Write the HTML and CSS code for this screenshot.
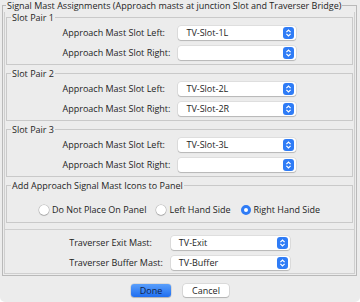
FILE: index.html
```html
<!DOCTYPE html>
<html lang="en">
<head>
  <meta charset="UTF-8">
  <title>Signal Mast Assignments</title>
  <link rel="stylesheet" href="styles.css">
</head>
<body>
  <div class="window">
    <fieldset class="outer">
      <legend>Signal Mast Assignments (Approach masts at junction Slot and Traverser Bridge)</legend>
      <div class="inner">
        <fieldset class="group">
          <legend>Slot Pair 1</legend>
          <div class="form">
            <label>Approach Mast Slot Left:</label>
            <div class="combo"><span>TV-Slot-1L</span><svg class="step" viewBox="0 0 11 12"><rect width="11" height="12" rx="3"/><path d="M3.4 5.1 L5.5 3 L7.6 5.1 M3.4 6.9 L5.5 9 L7.6 6.9"/></svg></div>
            <label>Approach Mast Slot Right:</label>
            <div class="combo"><span></span><svg class="step" viewBox="0 0 11 12"><rect width="11" height="12" rx="3"/><path d="M3.4 5.1 L5.5 3 L7.6 5.1 M3.4 6.9 L5.5 9 L7.6 6.9"/></svg></div>
          </div>
        </fieldset>
        <fieldset class="group">
          <legend>Slot Pair 2</legend>
          <div class="form">
            <label>Approach Mast Slot Left:</label>
            <div class="combo"><span>TV-Slot-2L</span><svg class="step" viewBox="0 0 11 12"><rect width="11" height="12" rx="3"/><path d="M3.4 5.1 L5.5 3 L7.6 5.1 M3.4 6.9 L5.5 9 L7.6 6.9"/></svg></div>
            <label>Approach Mast Slot Right:</label>
            <div class="combo"><span>TV-Slot-2R</span><svg class="step" viewBox="0 0 11 12"><rect width="11" height="12" rx="3"/><path d="M3.4 5.1 L5.5 3 L7.6 5.1 M3.4 6.9 L5.5 9 L7.6 6.9"/></svg></div>
          </div>
        </fieldset>
        <fieldset class="group">
          <legend>Slot Pair 3</legend>
          <div class="form">
            <label>Approach Mast Slot Left:</label>
            <div class="combo"><span>TV-Slot-3L</span><svg class="step" viewBox="0 0 11 12"><rect width="11" height="12" rx="3"/><path d="M3.4 5.1 L5.5 3 L7.6 5.1 M3.4 6.9 L5.5 9 L7.6 6.9"/></svg></div>
            <label>Approach Mast Slot Right:</label>
            <div class="combo"><span></span><svg class="step" viewBox="0 0 11 12"><rect width="11" height="12" rx="3"/><path d="M3.4 5.1 L5.5 3 L7.6 5.1 M3.4 6.9 L5.5 9 L7.6 6.9"/></svg></div>
          </div>
        </fieldset>
        <fieldset class="group placement">
          <legend>Add Approach Signal Mast Icons to Panel</legend>
          <div class="radios">
            <label class="radio"><span class="dot"></span>Do Not Place On Panel</label>
            <label class="radio"><span class="dot"></span>Left Hand Side</label>
            <label class="radio"><span class="dot on"></span>Right Hand Side</label>
          </div>
        </fieldset>
        <div class="traverser">
          <div class="form">
            <label>Traverser Exit Mast:</label>
            <div class="combo wide"><span>TV-Exit</span><svg class="step" viewBox="0 0 11 12"><rect width="11" height="12" rx="3"/><path d="M3.4 5.1 L5.5 3 L7.6 5.1 M3.4 6.9 L5.5 9 L7.6 6.9"/></svg></div>
            <label>Traverser Buffer Mast:</label>
            <div class="combo wide"><span>TV-Buffer</span><svg class="step" viewBox="0 0 11 12"><rect width="11" height="12" rx="3"/><path d="M3.4 5.1 L5.5 3 L7.6 5.1 M3.4 6.9 L5.5 9 L7.6 6.9"/></svg></div>
          </div>
        </div>
      </div>
    </fieldset>
    <div class="buttons">
      <button type="button" class="btn primary">Done</button>
      <button type="button" class="btn">Cancel</button>
    </div>
  </div>
</body>
</html>
```

FILE: styles.css
```css
html {
  background: #ffffff;
}
body {
  margin: 0;
  font-family: "Open Sans", "DejaVu Sans", sans-serif;
  font-size: 9px;
  color: #1e1e1e;
}
.window {
  height: 302px;
  background: #ececec;
  border-radius: 0 0 5px 5px;
  overflow: hidden;
}
fieldset {
  margin: 0;
  padding: 0;
  min-width: 0;
}
legend {
  padding: 0 1px;
  line-height: 11px;
}
.outer {
  margin: 0 3px 0 2px;
  border: 1px solid #b9b9b9;
}
.outer > legend {
  margin-left: 3px;
}
.inner {
  margin: 0 1px 1px 1px;
  border: 1px solid #cfcfcf;
  border-top: none;
}
.group {
  margin: 1px 1px 3px 1px;
  border: 1px solid #c9c9c9;
}
.group + .group {
  margin-top: 0;
}
.group > legend {
  margin-left: 4px;
}
.form {
  display: grid;
  grid-template-columns: auto auto;
  justify-content: center;
  align-items: center;
  column-gap: 8px;
  row-gap: 6px;
  padding: 3px 0 4px;
}
.form label {
  line-height: 14px;
}
.combo {
  position: relative;
  width: 118px;
  height: 14px;
  background: #ffffff;
  border-radius: 3px;
  box-shadow: 0 0 0 0.5px rgba(0, 0, 0, 0.12), 0 1px 1px rgba(0, 0, 0, 0.18);
  display: flex;
  align-items: center;
}
.combo.wide {
  width: 119px;
}
.combo span {
  padding-left: 8px;
  line-height: 14px;
}
.step {
  position: absolute;
  right: 2px;
  top: 1px;
  width: 11px;
  height: 12px;
}
.step rect {
  fill: #2f7cf6;
}
.step path {
  fill: none;
  stroke: #ffffff;
  stroke-width: 1.2;
}
.placement {
  margin-bottom: 6px;
}
.radios {
  display: flex;
  justify-content: center;
  gap: 10px;
  padding: 13px 0 6px;
}
.radio {
  display: flex;
  align-items: center;
  gap: 3px;
  line-height: 12px;
}
.dot {
  width: 10px;
  height: 10px;
  border-radius: 50%;
  background: #ffffff;
  box-shadow: 0 0 0 0.5px rgba(0, 0, 0, 0.25), 0 1px 1px rgba(0, 0, 0, 0.15);
  box-sizing: border-box;
}
.dot.on {
  border: 3px solid #2f7cf6;
  background-color: #ffffff;
  box-shadow: none;
}
.traverser {
  border-top: 1px solid #cfcfcf;
}
.traverser .form {
  padding: 6px 0 3px;
}
.buttons {
  display: flex;
  justify-content: center;
  gap: 12px;
  padding-top: 8px;
}
.btn {
  font: inherit;
  height: 13px;
  padding: 0;
  border: none;
  border-radius: 3px;
  background: #ffffff;
  color: #1e1e1e;
  line-height: 13px;
  width: 46px;
  box-shadow: 0 0 0 0.5px rgba(0, 0, 0, 0.15), 0 1px 1px rgba(0, 0, 0, 0.18);
}
.btn.primary {
  width: 40px;
  background: linear-gradient(#5a9ffb, #1f6ef0);
  color: #0f1f4a;
}
```
